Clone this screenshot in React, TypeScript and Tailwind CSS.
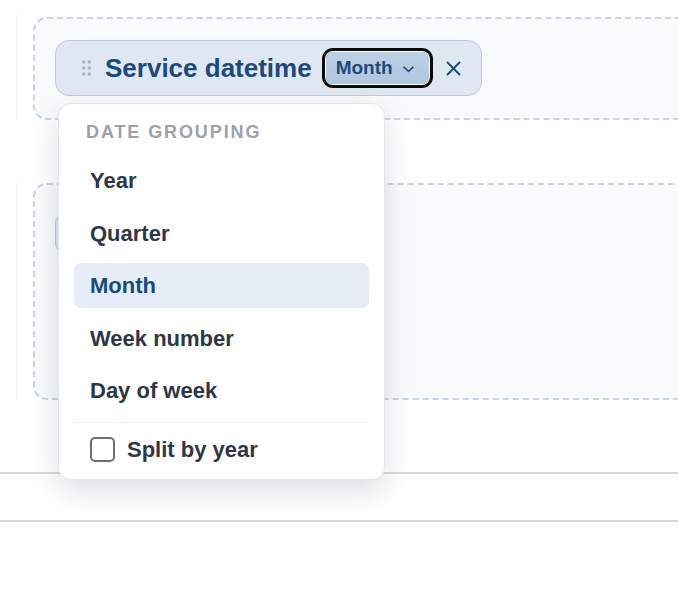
import { useState } from "react";

const options = ["Year", "Quarter", "Month", "Week number", "Day of week"];

function DragDots() {
  return (
    <svg width="9" height="16" viewBox="0 0 9 16" className="shrink-0">
      {[0, 1, 2].map((r) =>
        [0, 1].map((c) => (
          <circle key={`${r}-${c}`} cx={1.75 + c * 5.5} cy={2 + r * 6} r="1.75" fill="#a9b5c4" />
        ))
      )}
    </svg>
  );
}

function DateGroupingMenu({ selected, onSelect }: { selected: string; onSelect: (v: string) => void }) {
  const [split, setSplit] = useState(false);
  return (
    <div className="absolute left-[3px] top-[63px] z-20 w-[327px] rounded-[13px] border border-[#e3e6ea] bg-white px-[15px] pb-[4px] shadow-[0_10px_28px_rgba(15,23,42,0.14)]">
      <div className="mt-[17px] mb-[15px] h-[22px] pl-[12px] text-[18px] font-bold leading-[22px] tracking-[1.9px] text-[#9ca1ab]">
        DATE GROUPING
      </div>
      <div className="flex flex-col gap-[7.5px]">
        {options.map((o) => (
          <button
            key={o}
            onClick={() => onSelect(o)}
            className={`flex h-[45px] items-center rounded-[7px] pl-[16px] text-left text-[22px] font-bold ${
              o === selected ? "bg-[#e6edf6] text-[#1a4b7e]" : "text-[#2f3645]"
            }`}
          >
            {o}
          </button>
        ))}
      </div>
      <div className="mt-[9px] h-px bg-[#eceef1]" />
      <label className="flex h-[52px] items-center gap-[12px] pl-[16px]">
        <span
          onClick={() => setSplit(!split)}
          className="h-[25px] w-[25px] rounded-[5px] border-2 border-[#6b7079] bg-white"
        />
        <span className="text-[22px] font-bold text-[#2f3645]">Split by year</span>
      </label>
    </div>
  );
}

export default function App() {
  const [grouping, setGrouping] = useState("Month");

  return (
    <div className="relative h-[590px] w-[678px] overflow-hidden bg-white font-['Liberation_Sans',Arial,sans-serif]">
      <div className="flex pt-[15px] pl-[16px]">
        <div className="w-px bg-[#eceef0]" />
        <div className="mt-[2px] ml-[16px] -mr-[40px] h-[103px] flex-1 rounded-[14px] border-2 border-dashed border-[#c6d5e5] bg-[#f8fafc] pt-[21px] pl-[20px]">
          <div className="relative inline-block">
            <div className="flex h-[56px] items-center rounded-[14px] border-[1.5px] border-[#b8cbdf] bg-[#dfe8f2] pl-[26px] pr-[20px]">
              <DragDots />
              <span className="ml-[14px] text-[26px] font-bold text-[#1b4a7c]">Service datetime</span>
              <button className="ml-[14px] flex h-[32px] items-center rounded-[7px] bg-gradient-to-b from-[#bcd0e6] to-[#b1c6df] pl-[10px] pr-[15px] shadow-[0_0_0_1px_#ffffff,0_0_0_4px_#0b0b0b]">
                <span className="text-[19px] font-bold text-[#1b4a7c]">{grouping}</span>
                <svg width="11" height="7" viewBox="0 0 11 7" className="ml-[10px] mt-[3px]">
                  <path d="M1 1.2l4.5 4.3L10 1.2" fill="none" stroke="#1b4a7c" strokeWidth="1.6" strokeLinecap="round" strokeLinejoin="round" />
                </svg>
              </button>
              <svg width="15" height="15" viewBox="0 0 15 15" className="ml-[17px]">
                <path d="M1.5 1.5l12 12M13.5 1.5l-12 12" stroke="#1b4a7c" strokeWidth="1.9" strokeLinecap="round" />
              </svg>
            </div>
            <DateGroupingMenu selected={grouping} onSelect={setGrouping} />
          </div>
        </div>
      </div>

      <div className="mt-[63px] flex pl-[16px]">
        <div className="w-px bg-[#eceef0]" />
        <div className="ml-[16px] -mr-[40px] h-[217px] flex-1 rounded-[14px] border-2 border-dashed border-[#c6d5e5] bg-[#f8fafc] pt-[28px] pl-[20px]">
          <div className="h-[40px] w-[220px] rounded-[10px] border-[1.5px] border-[#b8cbdf] bg-[#dfe8f2]" />
        </div>
      </div>

      <div className="mt-[72px] h-[2px] bg-[#d9d9d9]" />
      <div className="mt-[46px] h-[2px] bg-[#d9d9d9]" />
    </div>
  );
}
